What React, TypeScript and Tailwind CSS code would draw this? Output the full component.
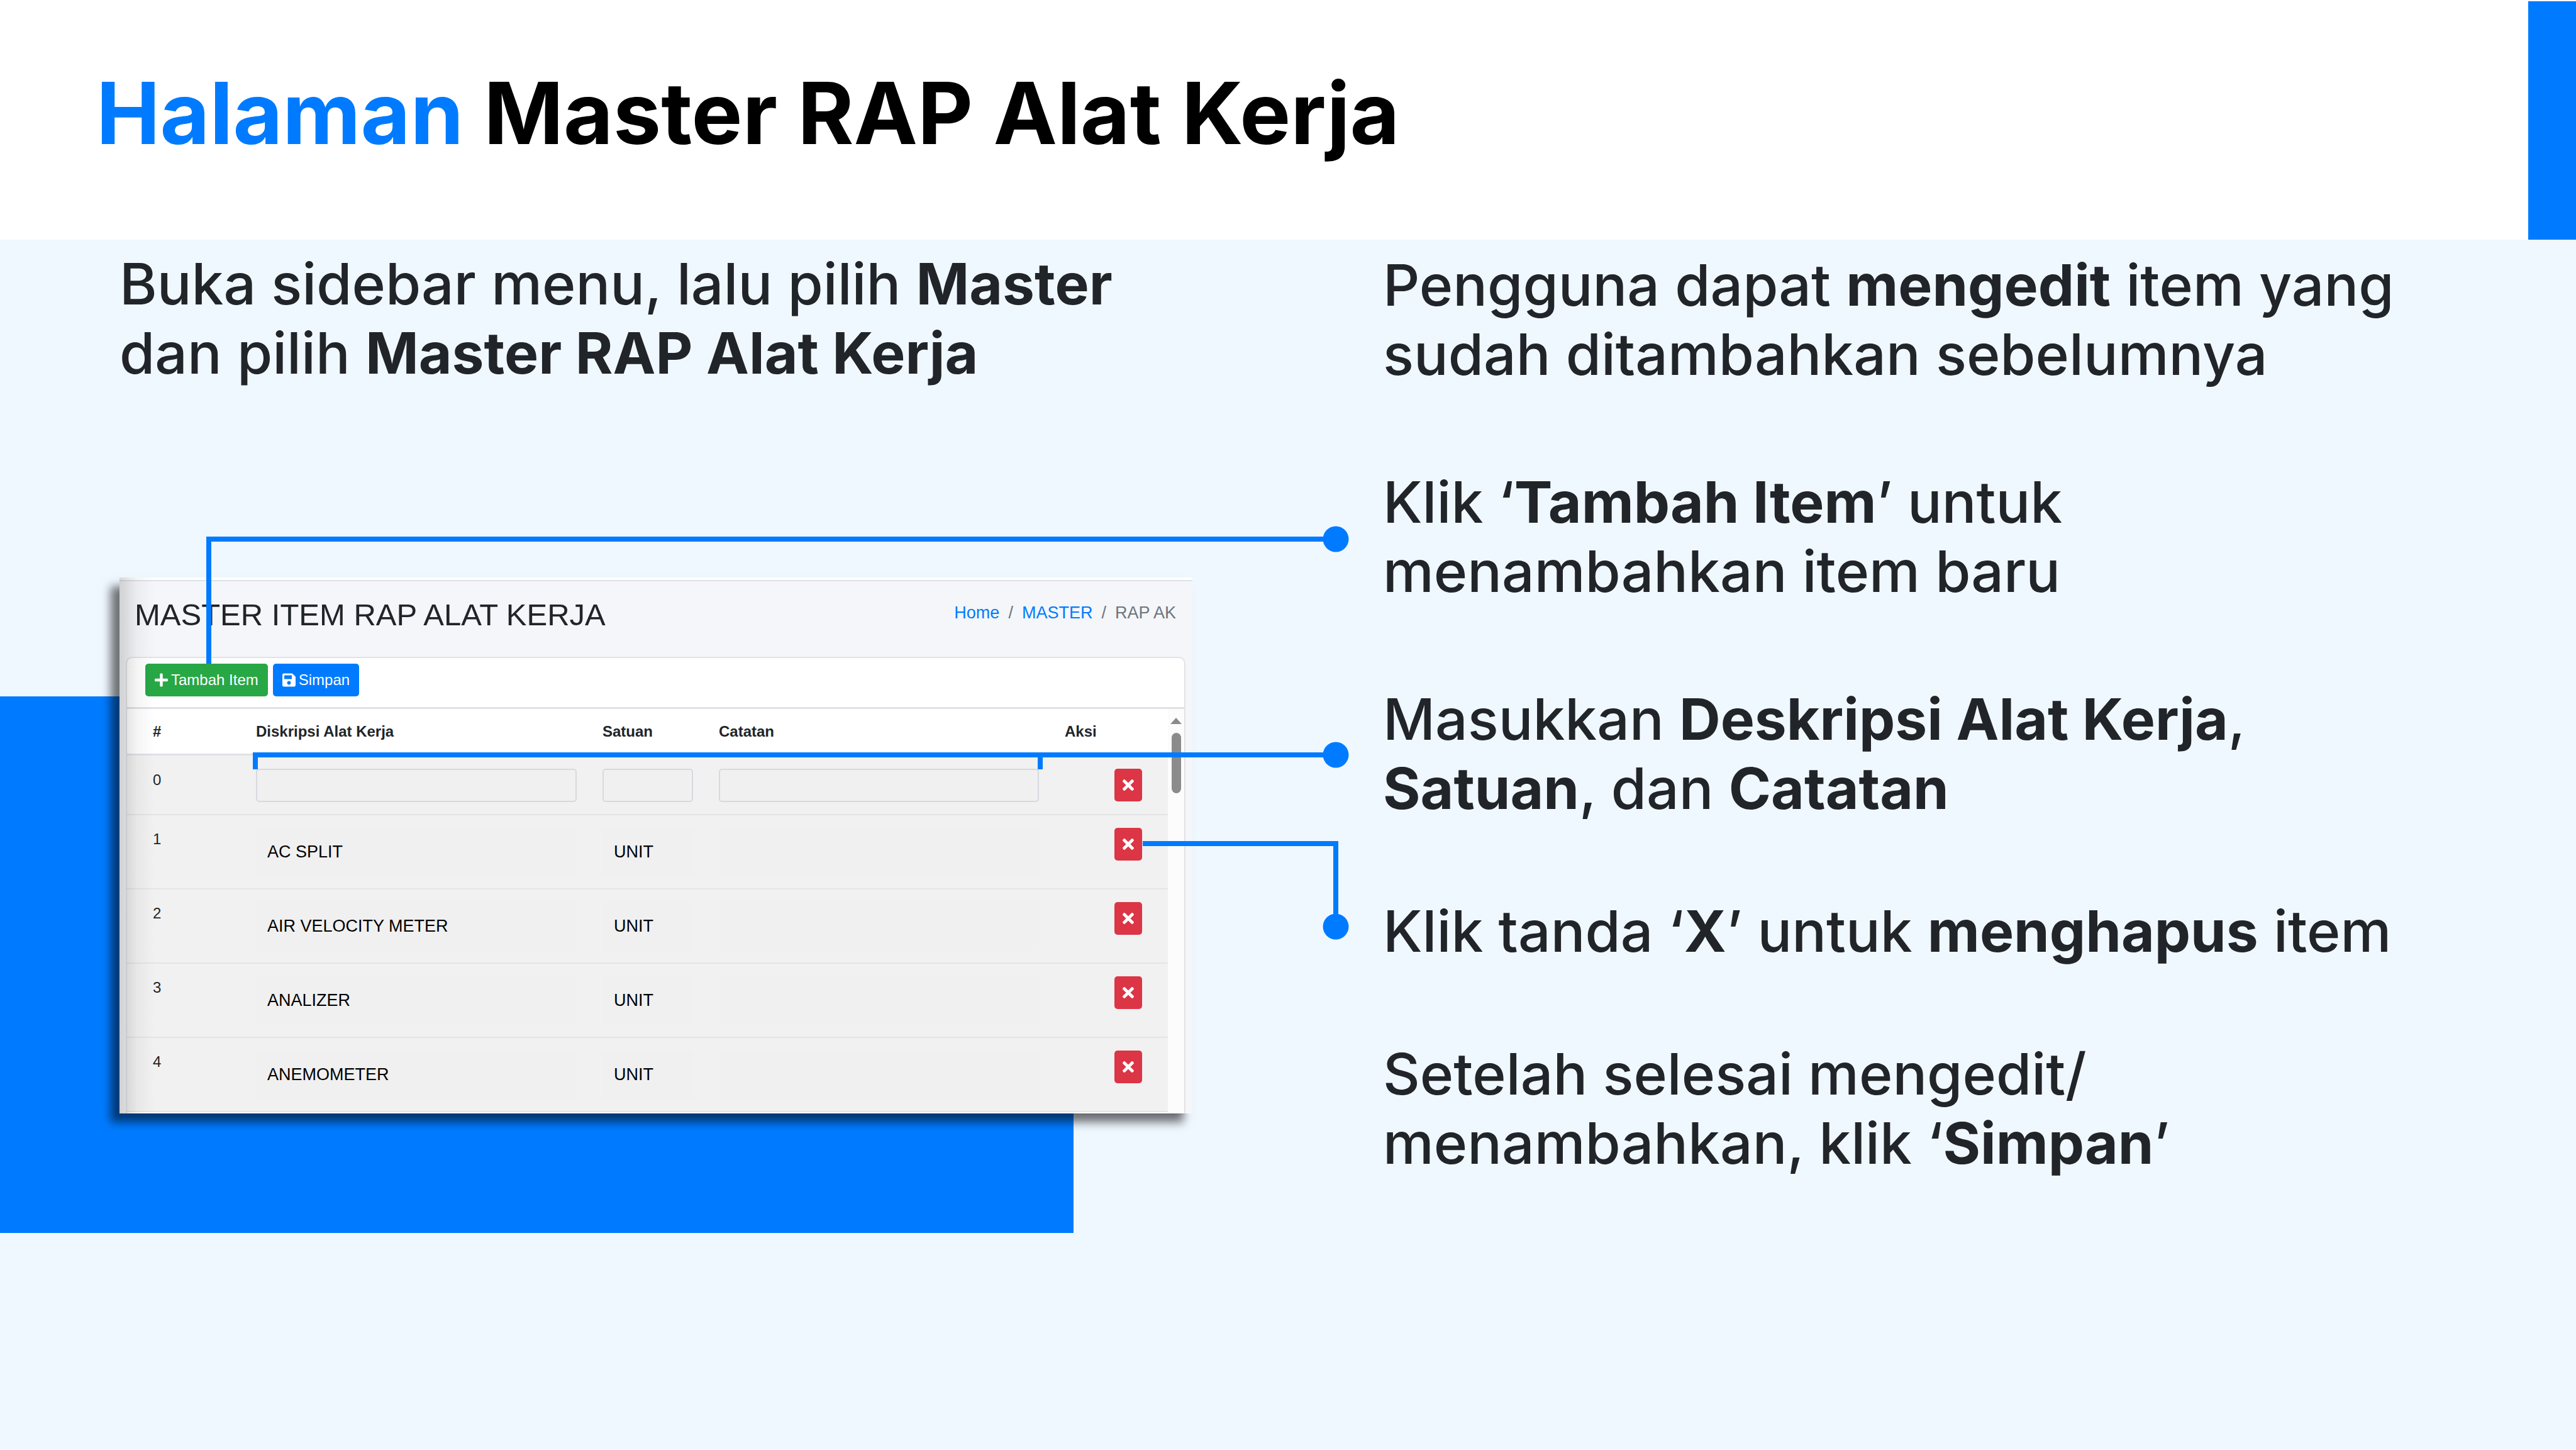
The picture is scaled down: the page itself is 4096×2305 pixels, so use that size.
import React from "react";
import { FaPlus, FaSave, FaTimes } from "react-icons/fa";

const tools = [
  { no: 0, name: "", unit: "" },
  { no: 1, name: "AC SPLIT", unit: "UNIT" },
  { no: 2, name: "AIR VELOCITY METER", unit: "UNIT" },
  { no: 3, name: "ANALIZER", unit: "UNIT" },
  { no: 4, name: "ANEMOMETER", unit: "UNIT" },
];

function Field({ label, value, filled }: { label: string; value: string; filled: boolean }) {
  return (
    <input
      type="text"
      aria-label={label}
      defaultValue={value}
      className={
        filled
          ? "block h-[77px] w-full bg-[#f0f0f0] px-[18px] text-[27px] text-black outline-none"
          : "block h-[53px] w-full rounded-[5px] border-2 border-[#d6dade] bg-[#f0f0f0] px-[18px] text-[27px] text-black outline-none"
      }
    />
  );
}

function ToolTable() {
  return (
    <table className="w-full table-fixed border-separate border-spacing-0 text-left text-[24px] leading-[36px] text-[#212529]">
      <colgroup>
        <col className="w-[185px]" />
        <col className="w-[551px]" />
        <col className="w-[185px]" />
        <col className="w-[550px]" />
        <col />
      </colgroup>
      <thead>
        <tr className="bg-white">
          <th className="h-[74px] border-b-[3px] border-[#dee2e6] pl-[41px] font-bold">#</th>
          <th className="border-b-[3px] border-[#dee2e6] pl-5 font-bold">Diskripsi Alat Kerja</th>
          <th className="border-b-[3px] border-[#dee2e6] pl-5 font-bold">Satuan</th>
          <th className="border-b-[3px] border-[#dee2e6] pl-5 font-bold">Catatan</th>
          <th className="border-b-[3px] border-[#dee2e6] pl-5 font-bold">Aksi</th>
        </tr>
      </thead>
      <tbody>
        {tools.map((t) => {
          const filled = t.no > 0;
          const cell = filled
            ? "border-b-2 border-[#e2e4e6] align-top pt-5 pl-5 pr-[21px]"
            : "border-b-2 border-[#e2e4e6] align-top pt-[21px] pl-5 pr-[21px]";
          return (
            <tr key={t.no} className="bg-[#f1f1f1]">
              <td
                className={
                  filled
                    ? "h-[118px] border-b-2 border-[#e2e4e6] pt-5 pl-[41px] align-top"
                    : "h-[95px] border-b-2 border-[#e2e4e6] pt-[21px] pl-[41px] align-top"
                }
              >
                {t.no}
              </td>
              <td className={cell}>
                <Field label={`Diskripsi ${t.no}`} value={t.name} filled={filled} />
              </td>
              <td className={cell}>
                <Field label={`Satuan ${t.no}`} value={t.unit} filled={filled} />
              </td>
              <td className={cell}>
                <Field label={`Catatan ${t.no}`} value="" filled={filled} />
              </td>
              <td
                className={
                  filled
                    ? "border-b-2 border-[#e2e4e6] pt-5 pr-[41px] align-top"
                    : "border-b-2 border-[#e2e4e6] pt-[21px] pr-[41px] align-top"
                }
              >
                <button
                  type="button"
                  aria-label={`Hapus ${t.no}`}
                  className="ml-auto flex h-[52px] w-11 items-center justify-center rounded-[5px] bg-[#dc3545] text-white"
                >
                  <FaTimes className="h-[26px] w-[18px]" />
                </button>
              </td>
            </tr>
          );
        })}
      </tbody>
    </table>
  );
}

function AppWindow() {
  return (
    <figure className="relative bg-[#f4f6f9] font-['Liberation_Sans',Arial,sans-serif] shadow-[-14px_14px_14px_rgba(0,0,0,0.55)]">
      <div className="h-1.5 border-b-2 border-[#dee2e6] bg-white" />
      <div className="flex items-start justify-between pt-[25px] pr-[26px] pb-[41px] pl-6">
        <h2 className="text-[49px] leading-[56px] text-[#212529]">MASTER ITEM RAP ALAT KERJA</h2>
        <nav aria-label="Breadcrumb" className="flex gap-[14px] text-[27px] leading-[50px] text-[#6c757d]">
          <a href="#home" className="text-[#007bff]">Home</a>
          <span>/</span>
          <a href="#master" className="text-[#007bff]">MASTER</a>
          <span>/</span>
          <span>RAP AK</span>
        </nav>
      </div>
      <section className="mr-[13px] ml-3 rounded-t-[8px] bg-white pb-0.5 shadow-[0_0_3px_rgba(0,0,0,0.3)]">
        <div className="flex gap-2 border-b-[3px] border-[#dee2e6] pt-[9px] pb-[17px] pl-[29px] text-[24px] leading-[52px] text-white">
          <button type="button" className="flex h-[52px] items-center gap-[5px] rounded-[5px] bg-[#28a745] px-[15px]">
            <FaPlus className="h-6 w-[21px]" />
            Tambah Item
          </button>
          <button type="button" className="flex h-[52px] items-center gap-[5px] rounded-[5px] bg-[#007bff] px-[15px]">
            <FaSave className="h-6 w-[21px]" />
            Simpan
          </button>
        </div>
        <div className="flex">
          <div className="min-w-0 flex-1">
            <ToolTable />
          </div>
          <div className="flex w-[26px] flex-col items-center bg-[#fcfcfc] pt-[14px]">
            <svg viewBox="0 0 18 10" className="h-2.5 w-[18px] fill-[#8b8b8b]">
              <path d="M9 0 18 10H0Z" />
            </svg>
            <div className="mt-[14px] h-24 w-[15px] rounded-full bg-[#8b8b8b]" />
          </div>
        </div>
      </section>
      <div className="pointer-events-none absolute inset-y-0 left-0 w-[56px] bg-linear-to-r from-black/15 via-black/4 to-transparent" />
    </figure>
  );
}

function Connectors() {
  return (
    <svg
      viewBox="0 0 4096 1924"
      preserveAspectRatio="xMinYMin meet"
      className="pointer-events-none absolute inset-0 h-full w-full"
      aria-hidden="true"
    >
      <g fill="none" stroke="#007bff" strokeWidth="8">
        <path d="M332 674V476H2124" />
        <path d="M406 842V819H2124M1654 819V842" />
        <path d="M1817 960H2124V1092" />
      </g>
      <g fill="#007bff">
        <circle cx="2124" cy="476" r="20.5" />
        <circle cx="2124" cy="819" r="20.5" />
        <circle cx="2124" cy="1092" r="20.5" />
      </g>
    </svg>
  );
}

export default function App() {
  return (
    <div className="flex min-h-screen flex-col bg-[#f0f8ff] font-['Inter',sans-serif]">
      <header className="flex justify-between bg-white">
        <h1 className="pt-[97px] pb-[118px] pl-[153px] text-[136px] leading-[166px] font-bold text-black">
          <span className="text-[#007bff]">Halaman</span> Master RAP Alat Kerja
        </h1>
        <div className="mt-0.5 w-[76px] bg-[#007bff]" />
      </header>
      <main className="relative grid flex-1 grid-cols-[2199fr_1897fr] text-[91px] leading-[110px] font-medium text-[#212529]">
        <div className="absolute top-[726px] left-0 h-[853px] w-[1707px] bg-[#007bff]" />
        <div className="relative pt-[15px] pr-[303px] pl-[190px]">
          <p className="whitespace-nowrap">
            Buka sidebar menu, lalu pilih <b>Master</b>
            <br />
            dan pilih <b>Master RAP Alat Kerja</b>
          </p>
          <div className="mt-[302px] font-normal">
            <AppWindow />
          </div>
        </div>
        <div className="relative flex flex-col pt-[17px] whitespace-nowrap">
          <p>
            Pengguna dapat <b>mengedit</b> item yang
            <br />
            sudah ditambahkan sebelumnya
          </p>
          <p className="mt-[125px]">
            Klik ‘<b>Tambah Item</b>’ untuk
            <br />
            menambahkan item baru
          </p>
          <p className="mt-[125px]">
            Masukkan <b>Deskripsi Alat Kerja</b>,
            <br />
            <b>Satuan</b>, dan <b>Catatan</b>
          </p>
          <p className="mt-[117px]">
            Klik tanda ‘<b>X</b>’ untuk <b>menghapus</b> item
          </p>
          <p className="mt-[117px]">
            Setelah selesai mengedit/
            <br />
            menambahkan, klik ‘<b>Simpan</b>’
          </p>
        </div>
        <Connectors />
      </main>
    </div>
  );
}
